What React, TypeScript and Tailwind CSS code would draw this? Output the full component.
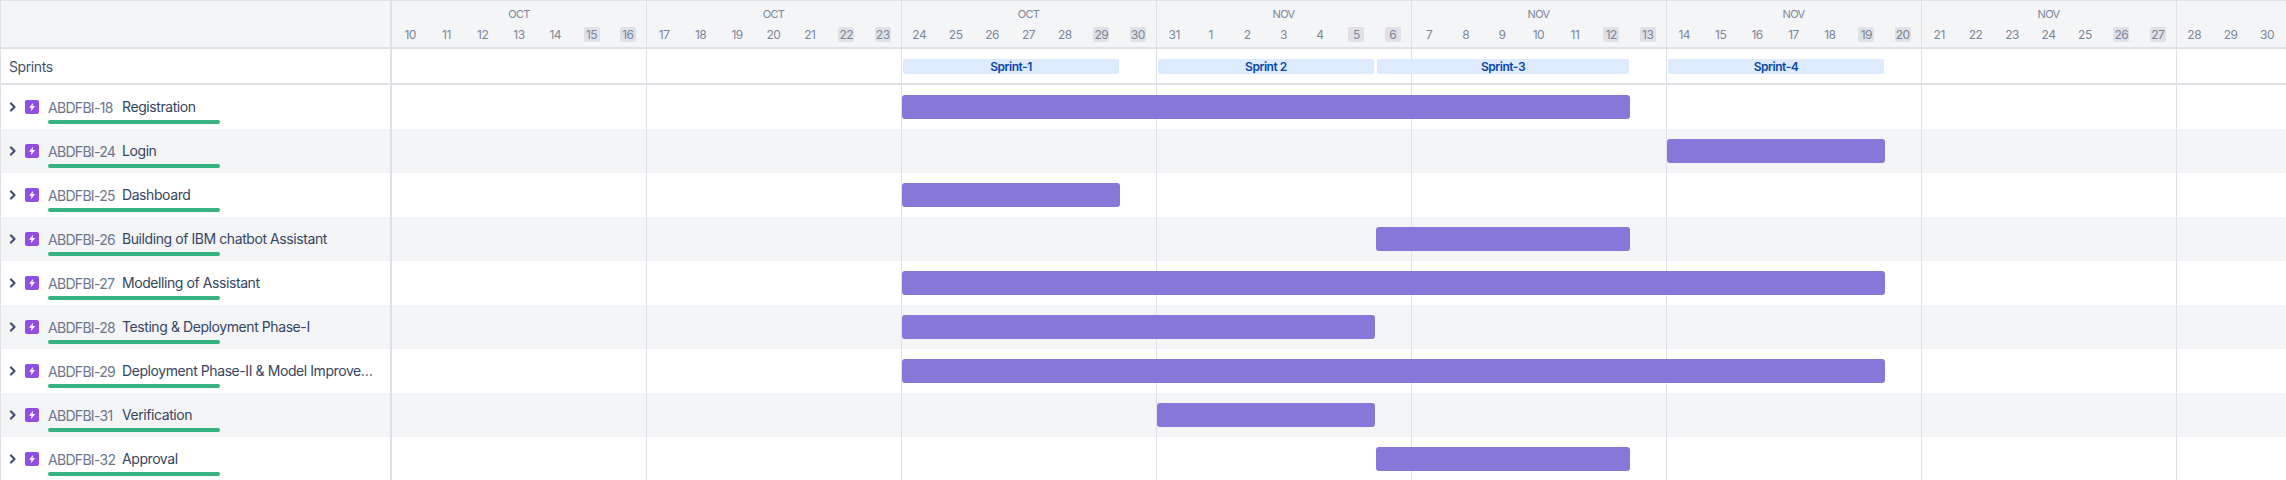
const weeks = [
  { month: "OCT", days: ["10", "11", "12", "13", "14", "15", "16"] },
  { month: "OCT", days: ["17", "18", "19", "20", "21", "22", "23"] },
  { month: "OCT", days: ["24", "25", "26", "27", "28", "29", "30"] },
  { month: "NOV", days: ["31", "1", "2", "3", "4", "5", "6"] },
  { month: "NOV", days: ["7", "8", "9", "10", "11", "12", "13"] },
  { month: "NOV", days: ["14", "15", "16", "17", "18", "19", "20"] },
  { month: "NOV", days: ["21", "22", "23", "24", "25", "26", "27"] },
  { month: "", days: ["28", "29", "30", "", "", "", ""] },
];

const sprints = [
  { name: "Sprint-1", className: "ml-[511px] w-[216px]" },
  { name: "Sprint 2", className: "ml-[39px] w-[216px]" },
  { name: "Sprint-3", className: "ml-[3px] w-[252px]" },
  { name: "Sprint-4", className: "ml-[39px] w-[216px]" },
];

const tasks = [
  { id: "ABDFBI-18", title: "Registration", bar: "ml-[510px] w-[728px]" },
  { id: "ABDFBI-24", title: "Login", bar: "ml-[1275px] w-[218px]" },
  { id: "ABDFBI-25", title: "Dashboard", bar: "ml-[510px] w-[218px]" },
  { id: "ABDFBI-26", title: "Building of IBM chatbot Assistant", bar: "ml-[984px] w-[254px]" },
  { id: "ABDFBI-27", title: "Modelling of Assistant", bar: "ml-[510px] w-[983px]" },
  { id: "ABDFBI-28", title: "Testing & Deployment Phase-I", bar: "ml-[510px] w-[473px]" },
  { id: "ABDFBI-29", title: "Deployment Phase-II & Model Improvement", bar: "ml-[510px] w-[983px]" },
  { id: "ABDFBI-31", title: "Verification", bar: "ml-[765px] w-[218px]" },
  { id: "ABDFBI-32", title: "Approval", bar: "ml-[984px] w-[254px]" },
];

function Chevron() {
  return (
    <svg width="8" height="10" viewBox="0 0 8 10" className="shrink-0 text-[#42526e]">
      <path d="M2 1.5 L5.5 5 L2 8.5" fill="none" stroke="currentColor" strokeWidth="2.2" strokeLinecap="round" strokeLinejoin="round" />
    </svg>
  );
}

function EpicIcon() {
  return (
    <div className="flex justify-center items-center w-[14px] h-[14px] shrink-0 rounded-[2px] bg-[#904ee2]">
      <svg width="14" height="14" viewBox="0 0 14 14">
        <path d="M8.2 2.7 L4 7.8 H6.5 L5.8 11.3 L10.2 6.1 H7.6 Z" fill="#ffffff" />
      </svg>
    </div>
  );
}

function TaskRow({ task, index }: { task: (typeof tasks)[number]; index: number }) {
  return (
    <div className={`flex h-[44px] shrink-0 ${index % 2 === 1 ? "bg-[#f4f5f7]" : "bg-white"}`}>
      <div className="flex items-start w-[392px] shrink-0 border-l border-r-2 border-[#dfe1e6] pl-[8px] pt-[12px] pr-[8px]">
        <div className="flex items-center w-[16px] h-[20px] shrink-0">
          <Chevron />
        </div>
        <div className="flex items-center h-[20px]">
          <EpicIcon />
        </div>
        <div className="flex flex-col ml-[9px] min-w-0">
          <div className="flex items-center h-[20px] w-[333px]">
            <span className="text-[14px] leading-[20px] tracking-[-0.7px] text-[#6b778c] w-[74px] shrink-0 mt-[1px]">{task.id}</span>
            <span className="text-[14px] leading-[20px] tracking-[-0.42px] text-[#344563] truncate w-[252px] -mt-[1px]">{task.title}</span>
          </div>
          <div className="w-[172px] h-[4px] mt-[3px] rounded-full bg-[#36b37e]"></div>
        </div>
      </div>
      <div className="flex-1 min-w-0 pt-[10px]">
        <div className={`relative z-10 h-[24px] rounded-[3px] bg-[#8777d9] ${task.bar}`}></div>
      </div>
    </div>
  );
}

export default function App() {
  return (
    <div className="relative flex flex-col w-[2286px] h-[480px] overflow-hidden bg-white font-['Inter',sans-serif]">
      {/* header */}
      <div className="flex h-[49px] shrink-0 bg-[#f4f5f7] border-t border-b-2 border-[#dfe1e6]">
        <div className="w-[392px] shrink-0 border-l border-r-2 border-[#dfe1e6]"></div>
        {weeks.map((week, i) => (
          <div key={i} className={`flex flex-col shrink-0 ${i === 0 ? "w-[254px]" : "w-[255px]"}`}>
            <div className="flex justify-center items-center h-[25px] pt-[1px] text-[11px] tracking-[-0.6px] text-[#7a869a]">{week.month}</div>
            <div className="flex">
              {week.days.map((d, j) => (
                <div key={j} className="flex justify-center flex-1 pt-[1px]">
                  {d !== "" && (
                    <span className={`flex justify-center items-center w-[16px] h-[15px] rounded-[2px] text-[12px] tracking-[-0.5px] text-[#7a869a] ${j > 4 ? "bg-[#dfe1e6]" : ""}`}>
                      {d}
                    </span>
                  )}
                </div>
              ))}
            </div>
          </div>
        ))}
      </div>

      {/* sprints */}
      <div className="flex h-[36px] shrink-0 border-b-2 border-[#dfe1e6] bg-white">
        <div className="flex items-center w-[392px] shrink-0 border-l border-r-2 border-[#dfe1e6] pl-[8px] text-[14px] tracking-[-0.4px] text-[#42526e]">
          Sprints
        </div>
        <div className="flex flex-1 min-w-0 pt-[10px]">
          {sprints.map((s) => (
            <div key={s.name} className={`relative z-10 flex justify-center items-center h-[15px] shrink-0 rounded-[2px] bg-[#deebff] text-[12px] tracking-[-0.45px] font-semibold text-[#0747a6] ${s.className}`}>
              {s.name}
            </div>
          ))}
        </div>
      </div>

      {/* task rows */}
      {tasks.map((t, i) => (
        <TaskRow key={t.id} task={t} index={i} />
      ))}

      {/* vertical week lines */}
      <div className="absolute top-0 bottom-0 left-[392px] flex pointer-events-none">
        {weeks.map((_, i) => (
          <div key={i} className={`shrink-0 h-full ${i === 0 ? "w-[254px]" : "w-[255px] border-l border-[#dfe1e6]"}`}></div>
        ))}
      </div>
    </div>
  );
}
